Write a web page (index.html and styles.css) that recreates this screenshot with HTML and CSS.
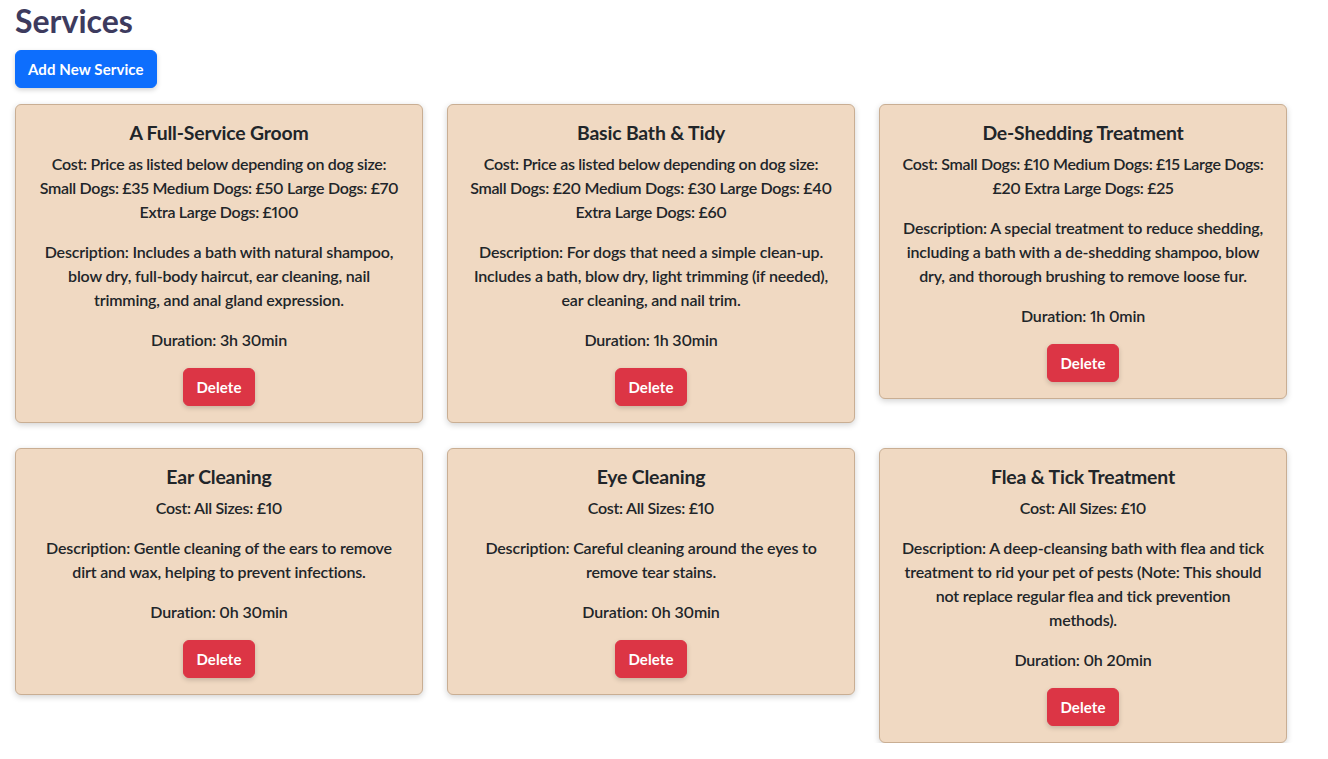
FILE: index.html
```html
<!DOCTYPE html>
<html>
<head>
<meta charset="utf-8">
<title>Services</title>
<link rel="stylesheet" href="styles.css">
</head>
<body>
<main class="page">
  <h1 class="page-title">Services</h1>
  <button class="btn btn-primary">Add New Service</button>
  <div class="grid">
    <div class="card">
      <h5 class="card-title">A Full-Service Groom</h5>
      <p class="cost">Cost: Price as listed below depending on dog size: Small Dogs: £35 Medium Dogs: £50 Large Dogs: £70 Extra Large Dogs: £100</p>
      <p class="desc">Description: Includes a bath with natural shampoo, blow dry, full-body haircut, ear cleaning, nail trimming, and anal gland expression.</p>
      <p class="duration">Duration: 3h 30min</p>
      <button class="btn btn-danger">Delete</button>
    </div>
    <div class="card">
      <h5 class="card-title">Basic Bath &amp; Tidy</h5>
      <p class="cost">Cost: Price as listed below depending on dog size: Small Dogs: £20 Medium Dogs: £30 Large Dogs: £40 Extra Large Dogs: £60</p>
      <p class="desc">Description: For dogs that need a simple clean-up. Includes a bath, blow dry, light trimming (if needed), ear cleaning, and nail trim.</p>
      <p class="duration">Duration: 1h 30min</p>
      <button class="btn btn-danger">Delete</button>
    </div>
    <div class="card">
      <h5 class="card-title">De-Shedding Treatment</h5>
      <p class="cost">Cost: Small Dogs: £10 Medium Dogs: £15 Large Dogs: £20 Extra Large Dogs: £25</p>
      <p class="desc">Description: A special treatment to reduce shedding, including a bath with a de-shedding shampoo, blow dry, and thorough brushing to remove loose fur.</p>
      <p class="duration">Duration: 1h 0min</p>
      <button class="btn btn-danger">Delete</button>
    </div>
    <div class="card">
      <h5 class="card-title">Ear Cleaning</h5>
      <p class="cost">Cost: All Sizes: £10</p>
      <p class="desc">Description: Gentle cleaning of the ears to remove dirt and wax, helping to prevent infections.</p>
      <p class="duration">Duration: 0h 30min</p>
      <button class="btn btn-danger">Delete</button>
    </div>
    <div class="card">
      <h5 class="card-title">Eye Cleaning</h5>
      <p class="cost">Cost: All Sizes: £10</p>
      <p class="desc">Description: Careful cleaning around the eyes to remove tear stains.</p>
      <p class="duration">Duration: 0h 30min</p>
      <button class="btn btn-danger">Delete</button>
    </div>
    <div class="card">
      <h5 class="card-title">Flea &amp; Tick Treatment</h5>
      <p class="cost">Cost: All Sizes: £10</p>
      <p class="desc">Description: A deep-cleansing bath with flea and tick treatment to rid your pet of pests (Note: This should not replace regular flea and tick prevention methods).</p>
      <p class="duration">Duration: 0h 20min</p>
      <button class="btn btn-danger">Delete</button>
    </div>
  </div>
</main>
</body>
</html>
```
FILE: styles.css
```css
* { box-sizing: border-box; }

body {
  margin: 0;
  background: #ffffff;
  color: #212529;
  font-family: "Lato", "Liberation Sans", sans-serif;
  font-weight: 600;
  font-size: 16px;
  letter-spacing: -0.17px;
  line-height: 1.5;
  font-variant-numeric: proportional-nums;
}

.page {
  padding: 0 15px;
}

.page-title {
  margin: 2px 0 10px;
  font-size: 32px;
  line-height: 38px;
  font-weight: 700;
  letter-spacing: 0;
  color: #3d3b5e;
}

.btn {
  display: inline-block;
  font-family: inherit;
  font-weight: 700;
  font-size: 15px;
  line-height: 24px;
  padding: 6px 12px;
  border: 1px solid transparent;
  border-radius: 6px;
  color: #ffffff;
  letter-spacing: 0.1px;
  box-shadow: 0 2px 5px rgba(0, 0, 0, 0.18);
  cursor: pointer;
}

.btn-primary {
  background: #0d6efd;
  border-color: #0d6efd;
}

.btn-danger {
  background: #dc3545;
  border-color: #dc3545;
}

.grid {
  margin-top: 16px;
  display: grid;
  grid-template-columns: repeat(3, 408px);
  column-gap: 24px;
  row-gap: 25px;
  align-items: start;
}

.card {
  background: #f0d9c2;
  border: 1px solid #c9ae93;
  border-radius: 6px;
  padding: 16px 20.5px;
  text-align: center;
  box-shadow: 0 2px 6px rgba(0, 0, 0, 0.18);
}

.card-title {
  margin: 0 0 7px;
  font-size: 19.4px;
  line-height: 24px;
  font-weight: 700;
}

.card p {
  margin: 0 0 16px;
}

.card .cost {
  letter-spacing: -0.3px;
}
```
